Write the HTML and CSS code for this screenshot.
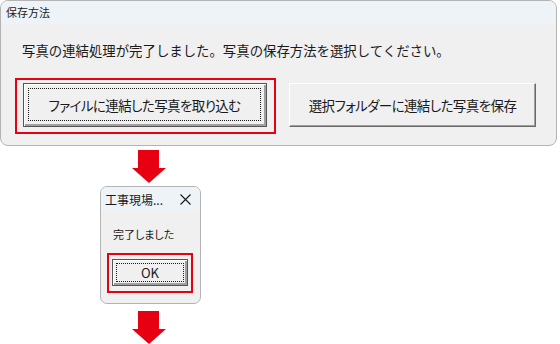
FILE: index.html
```html
<!DOCTYPE html>
<html lang="ja">
<head>
    <meta charset="UTF-8">
    <meta name="viewport" content="width=device-width, initial-scale=1.0">
    <title>保存方法</title>
    <link rel="stylesheet" href="styles.css">
</head>
<body>
    <div class="dialog">
        <div class="titlebar">保存方法</div>
        <p class="message">写真の連結処理が完了しました。写真の保存方法を選択してください。</p>
        <div class="buttons">
            <div class="mark">
                <button class="btn default"><span class="focus">ファイルに連結した写真を取り込む</span></button>
            </div>
            <button class="btn">選択フォルダーに連結した写真を保存</button>
        </div>
    </div>

    <svg class="arrow" width="34" height="33" viewBox="0 0 34 33">
        <polygon points="6,0 27,0 27,18 34,18 17,33 0,18 6,18" fill="#e60012"/>
    </svg>

    <div class="msgbox">
        <div class="msgbox-title">
            <span>工事現場...</span>
            <svg class="close" width="11" height="11" viewBox="0 0 11 11">
                <path d="M0.5 0.5 L10.5 10.5 M10.5 0.5 L0.5 10.5" stroke="#1a1a1a" stroke-width="1.1"/>
            </svg>
        </div>
        <p class="msgbox-text">完了しました</p>
        <div class="mark small">
            <button class="btn default ok"><span class="focus">OK</span></button>
        </div>
    </div>

    <svg class="arrow second" width="34" height="33" viewBox="0 0 34 33">
        <polygon points="6,0 27,0 27,18 34,18 17,33 0,18 6,18" fill="#e60012"/>
    </svg>
</body>
</html>
```

FILE: styles.css
```css
body {
    margin: 0;
    background: #fff;
    font-family: "Noto Sans CJK JP", "Noto Sans", sans-serif;
    color: #1a1a1a;
    width: 560px;
    height: 344px;
    overflow: hidden;
}
.dialog {
    width: 555px;
    background: #f0f0f0;
    border: 1px solid #b4b4b4;
    border-radius: 8px;
    padding-bottom: 11px;
    overflow: hidden;
}
.titlebar {
    height: 23px;
    line-height: 23px;
    background: #eef3f8;
    font-size: 11px;
    padding-left: 5px;
}
.message {
    margin: 16px 0 0 21px;
    font-size: 13.4px;
    line-height: 21px;
}
.buttons {
    display: flex;
    align-items: flex-start;
    gap: 13px;
    margin: 17px 0 0 14px;
}
.mark {
    border: 2px solid #e60012;
    padding: 3px 7px 5px 6px;
}
.btn {
    font-family: inherit;
    font-size: 13.5px;
    font-feature-settings: "palt";
    letter-spacing: -0.6px;
    color: #1a1a1a;
    background: #f0f0f0;
    border: 1px solid;
    border-color: #fff #6a6a6a #6a6a6a #fff;
    box-shadow: inset -1px -1px #a0a0a0;
    width: 247px;
    height: 44px;
    margin-top: 5px;
    padding: 0;
}
.btn.default {
    width: 244px;
    margin-top: 0;
    border-color: #555;
    box-shadow: inset 1px 1px #fff, inset -2px -2px #a0a0a0;
    padding: 4px 5px 5px 4px;
}
.focus {
    display: flex;
    align-items: center;
    justify-content: center;
    height: 100%;
    border: 1px dotted #1a1a1a;
    box-sizing: border-box;
}
.arrow {
    display: block;
    margin: 4px 0 0 132px;
}
.arrow.second {
    margin-top: 7px;
}
.msgbox {
    width: 99px;
    height: 116px;
    margin: 3px 0 0 100px;
    background: #f0f0f0;
    border: 1px solid #b4b4b4;
    border-radius: 7px;
    overflow: hidden;
}
.msgbox-title {
    height: 25px;
    background: #eef3f8;
    display: flex;
    align-items: center;
    justify-content: space-between;
    padding: 0 9px 0 4px;
    font-size: 12px;
}
.msgbox-text {
    margin: 14px 0 0 12px;
    font-size: 11px;
    font-feature-settings: "palt";
    line-height: 16px;
}
.mark.small {
    width: 76px;
    margin: 11px 0 0 6px;
    padding: 4px 3px 5px 3px;
}
.btn.ok {
    width: 76px;
    height: 27px;
    font-size: 13px;
    letter-spacing: 0;
    padding: 3px;
}
```
